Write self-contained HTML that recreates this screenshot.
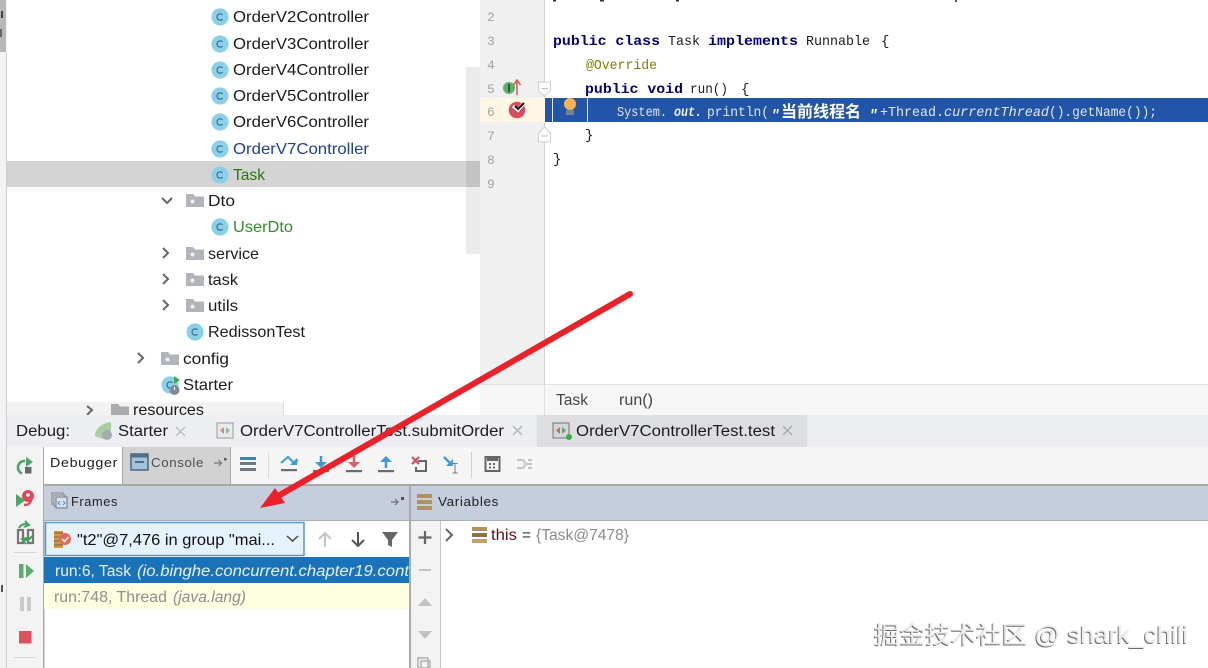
<!DOCTYPE html>
<html><head><meta charset="utf-8"><style>
html,body{margin:0;padding:0;background:#fff;width:1208px;height:668px;overflow:hidden}
svg{display:block;font-family:"Liberation Sans","Noto Sans CJK SC",sans-serif;filter:blur(.3px)}
.t{font-size:16px;fill:#1b1b1b}
.m{font-family:"Liberation Mono","Noto Sans CJK SC",monospace;font-size:14px;fill:#1a1a1a}
.k{font-weight:bold;fill:#000080}
.n{font-family:"Liberation Mono",monospace;font-size:13px;fill:#a4a4a4}
.u{font-size:15.5px;fill:#1d1d1d}
.s{font-size:13px;fill:#222;letter-spacing:.6px}
.w{fill:#dfe7f2}
</style></head><body>
<svg width="1208" height="668" viewBox="0 0 1208 668" xmlns="http://www.w3.org/2000/svg">
<defs>
<g id="c"><circle cx="0" cy="0" r="8.6" fill="#8bd0ea"/><path d="M2.600-2.100A3.200 3.200 0 1 0 2.600 2.100" fill="none" stroke="#3f6a84" stroke-width="1.200"/></g>
<g id="f"><path d="M0 0h7l2 2.500h9v10.500h-18z" fill="#b1b5b9"/><circle cx="6.500" cy="7.500" r="2" fill="#eef0f1"/></g>
</defs>

<!-- left edge -->
<rect x="0" y="0" width="7" height="668" fill="#f3f3f3"/>
<rect x="0" y="0" width="6" height="52" fill="#b8b8b8"/>
<rect x="6" y="52" width="1" height="616" fill="#cfcfcf"/>
<rect x="1" y="11" width="2" height="7" fill="#444"/><rect x="0" y="29" width="2" height="8" fill="#666"/>
<rect x="1" y="585" width="2" height="7" fill="#555"/>

<!-- tree -->
<rect x="466" y="67" width="14" height="187" fill="#ebebeb"/>
<rect x="7" y="161" width="473" height="26" fill="#d4d4d4"/>
<rect x="466" y="161" width="14" height="26" fill="#c3c3c3"/>
<use href="#c" x="220" y="17"/><text class="t" x="233" y="22" textLength="136" lengthAdjust="spacingAndGlyphs">OrderV2Controller</text>
<use href="#c" x="220" y="44"/><text class="t" x="233" y="49" textLength="136" lengthAdjust="spacingAndGlyphs">OrderV3Controller</text>
<use href="#c" x="220" y="70"/><text class="t" x="233" y="75" textLength="136" lengthAdjust="spacingAndGlyphs">OrderV4Controller</text>
<use href="#c" x="220" y="96"/><text class="t" x="233" y="101" textLength="136" lengthAdjust="spacingAndGlyphs">OrderV5Controller</text>
<use href="#c" x="220" y="122"/><text class="t" x="233" y="127" textLength="136" lengthAdjust="spacingAndGlyphs">OrderV6Controller</text>
<use href="#c" x="220" y="149"/><text class="t" x="233" y="154" textLength="136" lengthAdjust="spacingAndGlyphs" style="fill:#1c3f9c">OrderV7Controller</text>
<use href="#c" x="220" y="175"/><text class="t" x="233" y="180" textLength="32" lengthAdjust="spacingAndGlyphs" style="fill:#2a7610">Task</text>

<path d="M162 198l5 5 5-5" fill="none" stroke="#666" stroke-width="2"/>
<use href="#f" x="186" y="194"/><text class="t" x="208" y="206" textLength="27" lengthAdjust="spacingAndGlyphs">Dto</text>
<use href="#c" x="220" y="227"/><text class="t" x="233" y="232" textLength="60" lengthAdjust="spacingAndGlyphs" style="fill:#2f8f2a">UserDto</text>
<path d="M163 248l5 5-5 5" fill="none" stroke="#666" stroke-width="2"/>
<use href="#f" x="186" y="247"/><text class="t" x="208" y="259" textLength="51" lengthAdjust="spacingAndGlyphs">service</text>
<path d="M163 274l5 5-5 5" fill="none" stroke="#666" stroke-width="2"/>
<use href="#f" x="186" y="273"/><text class="t" x="208" y="285" textLength="30" lengthAdjust="spacingAndGlyphs">task</text>
<path d="M163 300l5 5-5 5" fill="none" stroke="#666" stroke-width="2"/>
<use href="#f" x="186" y="299"/><text class="t" x="208" y="311" textLength="30" lengthAdjust="spacingAndGlyphs">utils</text>
<use href="#c" x="195" y="332"/><text class="t" x="208" y="337" textLength="97" lengthAdjust="spacingAndGlyphs">RedissonTest</text>
<path d="M138 353l5 5-5 5" fill="none" stroke="#666" stroke-width="2"/>
<use href="#f" x="161" y="352"/><text class="t" x="183" y="364" textLength="46" lengthAdjust="spacingAndGlyphs">config</text>
<use href="#c" x="170" y="385"/><path d="M174 376l6 4-6 4z" fill="#4aa54a"/><circle cx="174.500" cy="390" r="5" fill="#7e8b94"/><path d="M174.500 387v3" stroke="#fff" stroke-width="1"/>
<text class="t" x="183" y="390" textLength="50" lengthAdjust="spacingAndGlyphs">Starter</text>
<rect x="7" y="402" width="277" height="13" fill="#f2f2f2"/><rect x="283" y="402" width="1" height="13" fill="#ddd"/>
<path d="M87 406l5 4-5 5" fill="none" stroke="#666" stroke-width="2"/>
<path d="M111 404h7l2 2.500h9v9h-18z" fill="#a8acb0"/>
<text class="t" x="133" y="415" textLength="71" lengthAdjust="spacingAndGlyphs">resources</text>
<rect x="7" y="415" width="300" height="2" fill="#e8eaed"/>

<!-- editor gutter -->
<rect x="480" y="0" width="64" height="384" fill="#f0f0f0"/>
<rect x="544" y="0" width="1" height="384" fill="#d4d4d4"/>
<rect x="480" y="98" width="65" height="24" fill="#fdf7e4"/>
<text class="n" x="487" y="21">2</text><text class="n" x="487" y="45">3</text><text class="n" x="487" y="69">4</text><text class="n" x="487" y="93">5</text><text class="n" x="487" y="116">6</text><text class="n" x="487" y="140">7</text><text class="n" x="487" y="164">8</text><text class="n" x="487" y="188">9</text>

<circle cx="509" cy="88" r="6" fill="#5cb26b"/><rect x="508" y="84" width="2" height="8" fill="#2c5a32"/>
<path d="M517 95v-14M513.500 85l3.500-5 3.500 5" fill="none" stroke="#d9534f" stroke-width="1.500"/>
<circle cx="517" cy="110" r="8.300" fill="#dc4b5c"/>
<path d="M513 106l5 4 5-6" fill="none" stroke="#fff" stroke-width="3.500"/>
<path d="M515 106l3 3 6-6" fill="none" stroke="#111" stroke-width="2"/>
<path d="M538.500 82h12v9l-6 5-6-5z" fill="#fbfbfb" stroke="#cfcfcf"/><path d="M541.500 88.500h6" stroke="#bbb"/>
<path d="M538.500 142v-9l6-6 6 6v9z" fill="#fbfbfb" stroke="#cfcfcf"/><path d="M541.500 136h6" stroke="#bbb"/>

<!-- editor -->
<rect x="553" y="0" width="3" height="1.500" fill="#333"/><rect x="600" y="0" width="4" height="1.500" fill="#333"/><rect x="676" y="0" width="3" height="1.500" fill="#333"/><rect x="955" y="0" width="2" height="2" fill="#555"/>
<text class="m k" x="553" y="45" textLength="107" lengthAdjust="spacingAndGlyphs">public class</text>
<text class="m" x="668" y="45" textLength="32" lengthAdjust="spacingAndGlyphs">Task</text>
<text class="m k" x="708" y="45" textLength="90" lengthAdjust="spacingAndGlyphs">implements</text>
<text class="m" x="806" y="45" textLength="64" lengthAdjust="spacingAndGlyphs">Runnable</text>
<text class="m" x="881" y="45">{</text>
<text class="m" x="586" y="69" textLength="71" lengthAdjust="spacingAndGlyphs" style="fill:#808000">@Override</text>
<text class="m k" x="585" y="93" textLength="98" lengthAdjust="spacingAndGlyphs">public void</text>
<text class="m" x="690" y="93" textLength="38" lengthAdjust="spacingAndGlyphs">run()</text>
<text class="m" x="741" y="93">{</text>
<rect x="545" y="98" width="663" height="24" fill="#2254a7"/>
<rect x="552" y="98" width="1" height="24" fill="#e8eef8"/><rect x="587" y="98" width="1" height="24" fill="#e8eef8"/>
<circle cx="570" cy="104" r="6" fill="#f3b552"/><rect x="566" y="110" width="8" height="5" fill="#76808f"/>
<text class="m w" x="617" y="116" textLength="50" lengthAdjust="spacingAndGlyphs">System.</text>
<text class="m" x="674" y="116" textLength="28" lengthAdjust="spacingAndGlyphs" style="font-weight:bold;font-style:italic;fill:#eef3fa">out.</text>
<text class="m w" x="707" y="116" textLength="62" lengthAdjust="spacingAndGlyphs">println(</text>
<text x="771" y="119" style="font-family:'Liberation Mono',monospace;font-size:14px;font-weight:bold;font-style:italic;fill:#fff">"</text>
<text x="781" y="117" textLength="80" lengthAdjust="spacingAndGlyphs" style="font-family:'Liberation Sans','Noto Sans CJK SC',sans-serif;font-size:16px;font-weight:bold;fill:#fff">当前线程名</text>
<text x="869" y="119" style="font-family:'Liberation Mono',monospace;font-size:14px;font-weight:bold;font-style:italic;fill:#fff">"</text>
<text class="m w" x="880" y="116" textLength="64" lengthAdjust="spacingAndGlyphs">+Thread.</text>
<text class="m w" x="944" y="116" textLength="105" lengthAdjust="spacingAndGlyphs" style="font-style:italic">currentThread</text>
<text class="m w" x="1049" y="116" textLength="108" lengthAdjust="spacingAndGlyphs">().getName());</text>
<text class="m" x="585" y="139">}</text>
<text class="m" x="553" y="163">}</text>

<!-- breadcrumb -->
<rect x="480" y="384" width="728" height="31" fill="#f6f6f6"/>
<rect x="480" y="384" width="728" height="1" fill="#e2e2e2"/>
<rect x="544" y="384" width="1" height="31" fill="#e0e0e0"/>
<text class="u" x="556" y="405" textLength="32" lengthAdjust="spacingAndGlyphs" style="fill:#444">Task</text>
<text class="u" x="619" y="405" textLength="34" lengthAdjust="spacingAndGlyphs" style="fill:#444">run()</text>

<!-- debug tab bar -->
<rect x="7" y="415" width="1201" height="32" fill="#eceef1"/>
<rect x="537" y="415" width="270" height="32" fill="#dcdee2"/>
<text class="u" x="16" y="436" textLength="54" lengthAdjust="spacingAndGlyphs">Debug:</text>
<path d="M95 436c0-8 8-13 16-14 1 7-1 15-8 17z" fill="#a7cf9f"/><circle cx="107" cy="435" r="5" fill="#a3acb3"/>
<text class="u" x="118" y="436" textLength="50" lengthAdjust="spacingAndGlyphs">Starter</text>
<path d="M176 427l9 9M185 427l-9 9" stroke="#b9bbbd" stroke-width="1.300"/>
<rect x="217" y="423" width="16" height="15" fill="#e9e9e9" stroke="#9b9b9b"/><path d="M224 427l-4 3.500 4 3.500z" fill="#d58a8a"/><path d="M226 427l4 3.500-4 3.500z" fill="#88c09a"/>
<text class="u" x="240" y="436" textLength="264" lengthAdjust="spacingAndGlyphs">OrderV7ControllerTest.submitOrder</text>
<path d="M513 426l9 9M522 426l-9 9" stroke="#b0b2b5" stroke-width="1.300"/>
<rect x="553" y="423" width="16" height="15" fill="#d6d6d6" stroke="#777"/><path d="M560 427l-4 3.500 4 3.500z" fill="#c96a6a"/><path d="M562 427l4 3.500-4 3.500z" fill="#55aa72"/><circle cx="569" cy="437" r="3" fill="#2fb344"/>
<text class="u" x="576" y="436" textLength="199" lengthAdjust="spacingAndGlyphs">OrderV7ControllerTest.test</text>
<path d="M783 426l9 9M792 426l-9 9" stroke="#a7a9ac" stroke-width="1.300"/>

<!-- side toolbar -->
<rect x="7" y="447" width="36" height="221" fill="#f3f3f3"/>
<rect x="43" y="447" width="1.500" height="221" fill="#a9a9a9"/>
<path d="M25 461a6.500 6.500 0 0 0-3 12.500" fill="none" stroke="#4ba66a" stroke-width="2.600"/><path d="M26 457l7 5-7 5z" fill="#4ba66a"/><rect x="25" y="467" width="6.500" height="6.500" fill="#6a6a6a"/>
<path d="M16 494l9 6.500-9 6.500z" fill="#4ba66a"/><circle cx="28" cy="496" r="6" fill="#dc4b5c"/><path d="M31 499c0 4-3 6-7 6" fill="none" stroke="#dc4b5c" stroke-width="2.500"/><circle cx="28" cy="495" r="1.800" fill="#fff"/>
<path d="M18 530h5v13h-5zM28 530h5v13h-5z" fill="none" stroke="#777" stroke-width="2.200"/><path d="M19 528c2-4 7-5 10-3M25 521l4 4-5 2" fill="none" stroke="#3fa55a" stroke-width="2"/><path d="M32 536c-2 4-7 5-10 3M26 544l-4-5 5-1" fill="none" stroke="#3fa55a" stroke-width="2"/>
<rect x="14" y="552" width="22" height="1" fill="#d5d5d5"/>
<rect x="19" y="564" width="4.500" height="14" fill="#5aab72"/><path d="M26 564l8 7-8 7z" fill="#5aab72"/>
<rect x="20" y="597" width="4" height="14" fill="#c9c9c9"/><rect x="27" y="597" width="4" height="14" fill="#c9c9c9"/>
<rect x="19" y="631" width="12.500" height="12.500" fill="#e2505f"/>
<rect x="14" y="657" width="22" height="1" fill="#d5d5d5"/>

<!-- toolbar -->
<rect x="44" y="447" width="1164" height="39" fill="#f5f5f5"/>
<rect x="44" y="447" width="78" height="39" fill="#fff"/>
<rect x="122" y="447" width="108" height="39" fill="#d2d2d2"/>
<rect x="122" y="447" width="1" height="39" fill="#a9a9a9"/><rect x="230" y="447" width="1" height="39" fill="#a9a9a9"/>
<rect x="44" y="484" width="1164" height="2" fill="#a6a6a6"/>
<text class="s" x="50" y="467" textLength="68" lengthAdjust="spacingAndGlyphs" style="fill:#1c1c1c">Debugger</text>
<rect x="131" y="454" width="17" height="16" fill="#a3c3da" stroke="#4f6f86" stroke-width="1.600"/><rect x="130.500" y="454" width="18" height="3.500" fill="#4f6f86"/><rect x="135" y="461" width="9" height="2" fill="#4f6f86"/>
<text class="s" x="151" y="467" textLength="53" lengthAdjust="spacingAndGlyphs" style="fill:#4b4b4b">Console</text>
<path d="M214 463h7M218.500 460l3 3-3 3" fill="none" stroke="#777" stroke-width="1.200"/><rect x="224" y="458" width="2.500" height="2.500" fill="#555"/>
<rect x="240" y="457" width="16" height="3" fill="#3c83b5"/><rect x="240" y="462" width="16" height="3" fill="#6b7c88"/><rect x="240" y="468" width="16" height="3" fill="#6b7c88"/>
<rect x="268" y="453" width="1" height="25" fill="#d9d9d9"/>
<path d="M281 463l7-6 6 6 4-3" fill="none" stroke="#3d9bd6" stroke-width="2"/><path d="M297 458v7h-7z" fill="#3d9bd6"/><rect x="281" y="469" width="16" height="2.200" fill="#6c6c6c"/>
<path d="M321 456v10" stroke="#3d9bd6" stroke-width="2.500"/><path d="M315 462h12l-6 6z" fill="#3d9bd6"/><rect x="313" y="470" width="16" height="2.200" fill="#6c6c6c"/>
<path d="M354 456v10" stroke="#d9606e" stroke-width="2.500"/><path d="M348 462h12l-6 6z" fill="#d9606e"/><rect x="346" y="470" width="16" height="2.200" fill="#6c6c6c"/>
<path d="M386 468v-10" stroke="#3d9bd6" stroke-width="2.500"/><path d="M380 462h12l-6-6z" fill="#3d9bd6"/><rect x="378" y="470" width="16" height="2.200" fill="#6c6c6c"/>
<path d="M412 457l7 7M419 457l-7 7" stroke="#dc4b5c" stroke-width="2.200"/><path d="M418 461h8v10h-10v-4" fill="none" stroke="#666" stroke-width="2"/>
<path d="M444 457l7 7" stroke="#3d9bd6" stroke-width="2.500"/><path d="M453 459v7h-7z" fill="#3d9bd6"/><path d="M455 464v9M452.500 463.500h5M452.500 473h5" stroke="#777" stroke-width="1"/>
<rect x="471" y="452" width="1" height="26" fill="#d0d0d0"/>
<rect x="485.500" y="457" width="14" height="14" fill="none" stroke="#666" stroke-width="2"/><rect x="487" y="458" width="11" height="3" fill="#666"/><path d="M489 464h2M493 464h2M489 467.500h2M493 467.500h2" stroke="#666" stroke-width="2"/>
<path d="M517 460h6l3 4h6M517 468h6l3-4M528 460h4M528 468h4" fill="none" stroke="#c5c5c5" stroke-width="2"/>

<!-- headers -->
<rect x="44" y="486" width="1164" height="34" fill="#c6cede"/>
<rect x="44" y="520" width="1164" height="1" fill="#a8acb4"/>
<rect x="409" y="486" width="2" height="182" fill="#a9abb0"/>
<rect x="52" y="493" width="11" height="11" fill="#d8dbe2" stroke="#7c8088"/><rect x="54" y="495" width="11" height="11" fill="#d8dbe2" stroke="#7c8088"/><rect x="56" y="497" width="11" height="11" fill="#d4e0ee" stroke="#6f7580"/><path d="M60 501l-2 2 2 2M63 501l2 2-2 2" fill="none" stroke="#3f7fb5" stroke-width=".8"/>
<text class="s" x="71" y="506" textLength="47" lengthAdjust="spacingAndGlyphs">Frames</text>
<path d="M391 502h7M395 499l3 3-3 3" fill="none" stroke="#6a6e76" stroke-width="1.200"/><rect x="401" y="497" width="3" height="3" fill="#555"/>
<rect x="417" y="494" width="15" height="4" fill="#b3915a"/><rect x="417" y="500" width="15" height="4" fill="#b3915a"/><rect x="417" y="506" width="15" height="4" fill="#b3915a"/>
<text class="s" x="438" y="506" textLength="61" lengthAdjust="spacingAndGlyphs">Variables</text>

<!-- frames -->
<rect x="45.500" y="522.500" width="258.500" height="33" fill="#e6f2fb" stroke="#4b9bd3" stroke-width="1.500"/>
<rect x="54" y="531" width="9" height="17" fill="#d49a4a"/><path d="M54 533h9M54 537h9M54 541h9M54 545h9" stroke="#8c5a2a" stroke-width="1"/>
<circle cx="65" cy="539" r="6" fill="#e4685c"/><path d="M62 539l2.500 2.500 4-4.500" fill="none" stroke="#fff" stroke-width="1.500"/>
<text class="u" x="77" y="545" textLength="198" lengthAdjust="spacingAndGlyphs" style="font-size:16px;fill:#111">"t2"@7,476 in group "mai...</text>
<path d="M287 536l5.500 5 5.500-5" fill="none" stroke="#444" stroke-width="1.500"/>
<path d="M325 547v-14M319 539l6-6 6 6" fill="none" stroke="#c3c3c3" stroke-width="2"/>
<path d="M358 532v14M352 540l6 6 6-6" fill="none" stroke="#555" stroke-width="2"/>
<path d="M382 532h16l-6 8v7l-4-2v-5z" fill="#666"/>
<rect x="44" y="557" width="365" height="26" fill="#1a73b9"/>
<rect x="44" y="583" width="365" height="26" fill="#fdfddf"/>
<text class="u" x="55" y="576" textLength="76" lengthAdjust="spacingAndGlyphs" style="fill:#e8f1f9">run:6, Task</text>
<text class="u" x="137" y="576" textLength="272" lengthAdjust="spacingAndGlyphs" style="font-style:italic;fill:#e8f1f9">(io.binghe.concurrent.chapter19.cont</text>
<text class="u" x="54" y="602" textLength="113" lengthAdjust="spacingAndGlyphs" style="fill:#8f8f8f">run:748, Thread</text>
<text class="u" x="173" y="602" textLength="73" lengthAdjust="spacingAndGlyphs" style="font-style:italic;fill:#8f8f8f">(java.lang)</text>

<!-- variables -->
<rect x="411" y="521" width="30" height="147" fill="#f3f3f3"/>
<rect x="440" y="521" width="1" height="147" fill="#c8c8c8"/>
<path d="M425 531v13M418.500 537.500h13" stroke="#666" stroke-width="2.200"/>
<path d="M419 570h12" stroke="#c2c2c2" stroke-width="2"/>
<path d="M418 606l7-8 7 8z" fill="#c2c2c2"/><path d="M418 631h14l-7 8z" fill="#c2c2c2"/>
<path d="M418 658h10v10h-10zM421 661h9v7h-9z" fill="#f3f3f3" stroke="#b0b0b0" stroke-width="1.500"/>
<path d="M446 529l6 6-6 6" fill="none" stroke="#666" stroke-width="2"/>
<rect x="472" y="527" width="15" height="4" fill="#b3915a"/><rect x="472" y="533" width="15" height="4" fill="#8f7240"/><rect x="472" y="539" width="15" height="4" fill="#c2a069"/>
<text class="u" x="491" y="540" textLength="26" lengthAdjust="spacingAndGlyphs" style="fill:#660e1e">this</text>
<text class="u" x="522" y="540" style="fill:#333">=</text>
<text class="u" x="536" y="540" textLength="93" lengthAdjust="spacingAndGlyphs" style="fill:#8b8b8b">{Task@7478}</text>

<!-- arrow -->
<path d="M630 294L278 496" stroke="#ec2028" stroke-width="6" stroke-linecap="round" fill="none"/>
<path d="M260 508L275 488L285 503z" fill="#ec2028"/>

<!-- watermark -->
<text x="874" y="643" textLength="314" lengthAdjust="spacingAndGlyphs" style="font-size:24px;fill:#ececec;filter:drop-shadow(-1px 1px 0 #6e6e6e)">掘金技术社区 @ shark_chili</text>
</svg>
</body></html>
